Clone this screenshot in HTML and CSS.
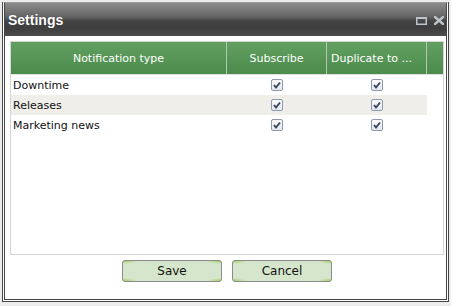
FILE: index.html
```html
<!DOCTYPE html>
<html lang="en">
<head>
    <meta charset="UTF-8">
    <title>Settings</title>
    <link rel="stylesheet" href="styles.css">
</head>
<body>
    <div class="window">
        <div class="titlebar">
            <span class="title">Settings</span>
            <div class="tools">
                <svg class="tool" width="11" height="8" viewBox="0 0 11 8">
                    <rect x="0.75" y="1" width="9.5" height="6.25" fill="none" stroke="#bcc4cc" stroke-width="1.5"/>
                    <rect x="0" y="0" width="11" height="2" fill="#bcc4cc"/>
                </svg>
                <svg class="tool" width="10" height="9" viewBox="0 0 10 9">
                    <path d="M1 1 L9 8 M9 1 L1 8" stroke="#bcc4cc" stroke-width="2.4" stroke-linecap="square"/>
                </svg>
            </div>
        </div>

        <div class="content">
            <div class="grid">
                <div class="grid-head">
                    <div class="hcell">Notification type</div>
                    <div class="hcell">Subscribe</div>
                    <div class="hcell hcell-left">Duplicate to ...</div>
                    <div class="hcell hcell-pad"></div>
                </div>
                <div class="row">
                    <div class="cell">Downtime</div>
                    <div class="cell cell-check"><span class="check"><svg width="10" height="10" viewBox="0 0 10 10"><path d="M2 5 L4 7.5 L8 2.5" fill="none" stroke="#3d4763" stroke-width="2"/></svg></span></div>
                    <div class="cell cell-check"><span class="check"><svg width="10" height="10" viewBox="0 0 10 10"><path d="M2 5 L4 7.5 L8 2.5" fill="none" stroke="#3d4763" stroke-width="2"/></svg></span></div>
                </div>
                <div class="row row-alt">
                    <div class="cell">Releases</div>
                    <div class="cell cell-check"><span class="check"><svg width="10" height="10" viewBox="0 0 10 10"><path d="M2 5 L4 7.5 L8 2.5" fill="none" stroke="#3d4763" stroke-width="2"/></svg></span></div>
                    <div class="cell cell-check"><span class="check"><svg width="10" height="10" viewBox="0 0 10 10"><path d="M2 5 L4 7.5 L8 2.5" fill="none" stroke="#3d4763" stroke-width="2"/></svg></span></div>
                </div>
                <div class="row">
                    <div class="cell">Marketing news</div>
                    <div class="cell cell-check"><span class="check"><svg width="10" height="10" viewBox="0 0 10 10"><path d="M2 5 L4 7.5 L8 2.5" fill="none" stroke="#3d4763" stroke-width="2"/></svg></span></div>
                    <div class="cell cell-check"><span class="check"><svg width="10" height="10" viewBox="0 0 10 10"><path d="M2 5 L4 7.5 L8 2.5" fill="none" stroke="#3d4763" stroke-width="2"/></svg></span></div>
                </div>
            </div>

            <div class="buttons">
                <button class="btn">Save</button>
                <button class="btn">Cancel</button>
            </div>
        </div>
    </div>
</body>
</html>
```

FILE: styles.css
```css
body, html {
    margin: 0;
    background-color: #ececec;
    font-family: 'DejaVu Sans', Verdana, sans-serif;
    font-size: 11px;
}

.window {
    margin: 2px 0 0 2px;
    width: 447px;
    height: 300px;
    box-sizing: border-box;
    border: 3px double #464646;
    border-top: 1px solid #9a9a9a;
    background-color: white;
    display: flex;
    flex-direction: column;
}

.titlebar {
    height: 33px;
    flex-shrink: 0;
    display: flex;
    align-items: center;
    justify-content: space-between;
    padding: 0 2px 0 3px;
    background: linear-gradient(#8c8c8c 0%, #666 40%, #444 55%, #3e3e3e 75%, #4c4c4c 100%);
}

.title {
    color: white;
    font-family: 'Liberation Sans', Arial, sans-serif;
    font-size: 14px;
    font-weight: bold;
    text-shadow: 0 0 1px rgba(0, 0, 0, 0.4);
}

.tools {
    display: flex;
    align-items: center;
    gap: 7px;
    margin-top: 2px;
}

.tool {
    display: block;
}

.content {
    flex: 1;
    padding: 5px 0 0 5px;
}

.grid {
    width: 434px;
    height: 214px;
    box-sizing: border-box;
    border: 1px solid #d6d6d6;
}

.grid-head {
    display: grid;
    grid-template-columns: 216px 100px 100px 16px;
    height: 33px;
    box-sizing: border-box;
    background: linear-gradient(#62a062, #4b8b4b);
    border-bottom: 1px solid #e2e2e2;
}

.hcell {
    display: flex;
    align-items: center;
    justify-content: center;
    color: white;
    border-right: 1px solid #b4c9b4;
    white-space: nowrap;
    overflow: hidden;
}

.hcell-left {
    justify-content: flex-start;
    padding-left: 4px;
}

.hcell-pad {
    border-right: none;
}

.row {
    display: grid;
    grid-template-columns: 216px 100px 100px;
    width: 416px;
    height: 20px;
    color: #111;
}

.row-alt {
    background-color: #efeee8;
}

.cell {
    display: flex;
    align-items: center;
    padding-left: 2px;
}

.cell-check {
    justify-content: center;
    padding-left: 0;
}

.check {
    width: 10px;
    height: 10px;
    border: 1px solid #8d99b0;
    border-radius: 2px;
    background: linear-gradient(#fdfdfd, #e4e7ec);
    display: flex;
    align-items: center;
    justify-content: center;
}

.check svg {
    display: block;
}

.buttons {
    width: 434px;
    display: flex;
    justify-content: center;
    gap: 10px;
    margin-top: 5px;
}

.btn {
    width: 100px;
    height: 22px;
    border: 1px solid #8b8b8b;
    border-radius: 3px;
    font-family: 'DejaVu Sans', Verdana, sans-serif;
    font-size: 12px;
    color: #111;
    padding: 0;
    background:
        radial-gradient(ellipse 14px 3px at 0 0, #9fd05e, transparent),
        radial-gradient(ellipse 14px 3px at 100% 0, #9fd05e, transparent),
        radial-gradient(ellipse 14px 3px at 0 100%, #9fd05e, transparent),
        radial-gradient(ellipse 14px 3px at 100% 100%, #9fd05e, transparent),
        #d6e6cc;
}
```
